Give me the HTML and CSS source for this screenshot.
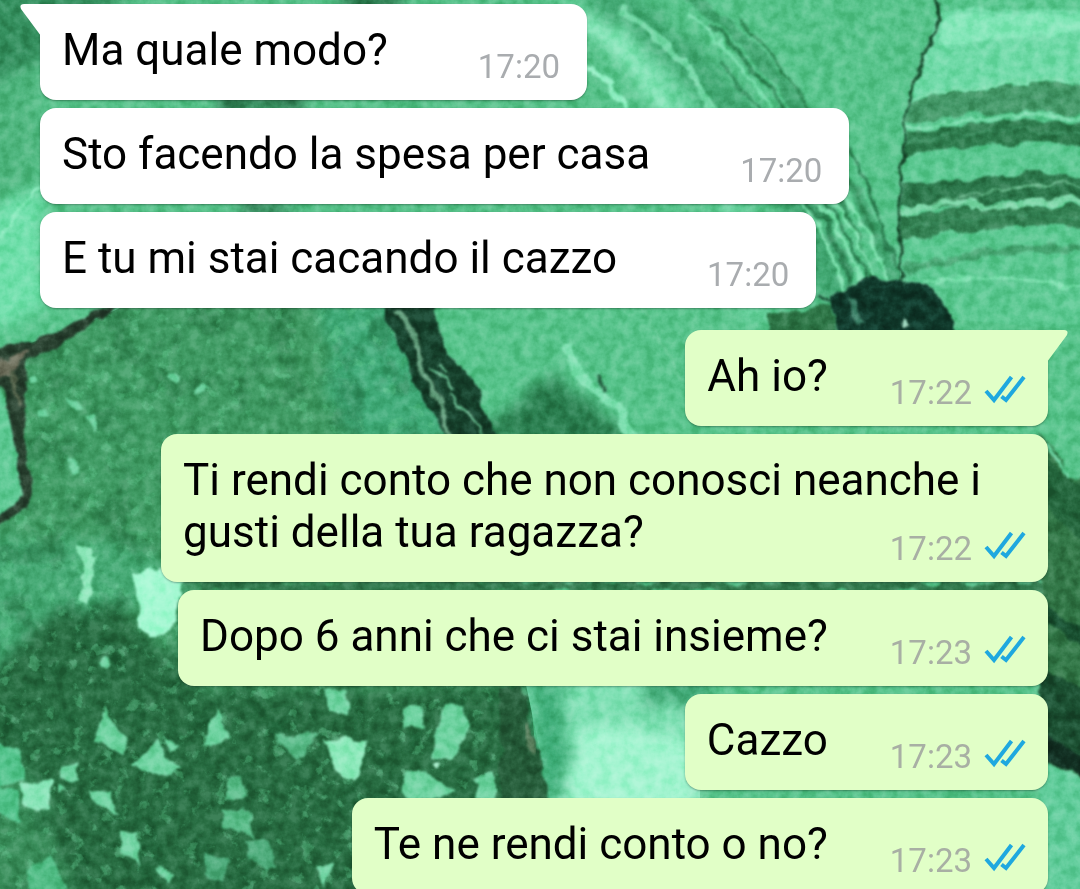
FILE: index.html
```html
<!DOCTYPE html>
<html lang="it">
<head>
    <meta charset="utf-8">
    <meta name="viewport" content="width=device-width, initial-scale=1">
    <title>Chat</title>
    <link rel="stylesheet" href="styles.css">
</head>
<body>
    <!-- malachite wallpaper -->
    <svg class="wallpaper" viewBox="0 0 1080 889" preserveAspectRatio="xMidYMin slice" aria-hidden="true">
        <defs>
            <filter id="rough" x="-10%" y="-10%" width="120%" height="120%">
                <feTurbulence type="fractalNoise" baseFrequency="0.05" numOctaves="3" seed="4" result="n"/>
                <feDisplacementMap in="SourceGraphic" in2="n" scale="14" xChannelSelector="R" yChannelSelector="G"/>
                <feGaussianBlur stdDeviation="1"/>
            </filter>
            <filter id="soft" x="-20%" y="-20%" width="140%" height="140%">
                <feTurbulence type="fractalNoise" baseFrequency="0.05" numOctaves="3" seed="9" result="n"/>
                <feDisplacementMap in="SourceGraphic" in2="n" scale="34" xChannelSelector="R" yChannelSelector="G"/>
                <feGaussianBlur stdDeviation="7"/>
            </filter>
            <filter id="grain" x="0" y="0" width="100%" height="100%">
                <feTurbulence type="fractalNoise" baseFrequency="0.09" numOctaves="4" seed="12"/>
                <feColorMatrix values="1.8 0 0 0 -0.4  1.8 0 0 0 -0.4  1.8 0 0 0 -0.4  0 0 0 0 1"/>
            </filter>
            <filter id="specks" x="0" y="0" width="100%" height="100%">
                <feTurbulence type="fractalNoise" baseFrequency="0.07" numOctaves="4" seed="21"/>
                <feColorMatrix values="0 0 0 0 0.4  0 0 0 0 0.8  0 0 0 0 0.58  7 0 0 0 -4.2"/>
            </filter>
            <filter id="shade" x="0" y="0" width="100%" height="100%">
                <feTurbulence type="fractalNoise" baseFrequency="0.03" numOctaves="5" seed="33"/>
                <feColorMatrix values="0 0 0 0 0.1  0 0 0 0 0.36  0 0 0 0 0.2  5 0 0 0 -2.6"/>
            </filter>
            <clipPath id="darkStone">
                <path d="M0 354 90 322 120 308 390 308 480 434 530 690 548 889 0 889Z"/>
            </clipPath>
        </defs>

        <rect width="1080" height="889" fill="#58c48c"/>

        <!-- top left slab -->
        <path d="M0 0H600V310H0Z" fill="#56c189"/>
        <g filter="url(#soft)">
            <path d="M-20-20H150L30 70-20 90Z" fill="#35905f"/>
            <path d="M-20 90 40 60V180L-20 220Z" fill="#50b780"/>
            <path d="M-20 210 45 190V310L-20 340Z" fill="#70dfab"/>
            <path d="M220 98H300V110H220ZM240 204H300V212H240Z" fill="#1d5a38"/>
            <path d="M340-10H400V8H340Z" fill="#2b7a4e"/>
        </g>
        <path d="M0 238 40 186" fill="none" stroke="#8cebbf" stroke-width="3" filter="url(#rough)"/>

        <!-- curved veins in the middle slab -->
        <g fill="none" filter="url(#soft)">
            <path d="M590-10C690 40 810 180 850 330" stroke="#43a974" stroke-width="34"/>
            <path d="M560 10C650 40 730 150 760 320" stroke="#6ad3a0" stroke-width="30"/>
            <path d="M585 20C650 65 660 110 700 160" stroke="#8ae8bc" stroke-width="16"/>
        </g>
        <g fill="none" filter="url(#rough)">
            <path d="M585 20C650 65 660 110 700 160" stroke="#86e4b8" stroke-width="6"/>
            <path d="M580 60C605 75 620 95 640 130" stroke="#94efc5" stroke-width="5"/>
            <path d="M620 10C690 50 700 100 740 150" stroke="#75d8a7" stroke-width="8"/>
            <path d="M690-5C790 70 860 190 900 290" stroke="#47aa76" stroke-width="12"/>
            <path d="M690 15C750 60 820 180 865 290" stroke="#7bdfae" stroke-width="3"/>
            <path d="M710 25C780 90 850 190 875 290" stroke="#338d5b" stroke-width="4"/>
            <path d="M740 20C805 90 845 160 875 240" stroke="#37925f" stroke-width="4"/>
            <path d="M720 60C780 140 820 190 855 290" stroke="#369160" stroke-width="3"/>
            <path d="M790 190C825 220 830 255 848 300M805 190C840 220 845 250 868 295M820 190C860 220 860 255 880 290M835 190C870 225 875 250 890 285" stroke="#80e2b0" stroke-width="3"/>
            <path d="M797 190C832 220 837 255 855 300M812 190C848 220 852 250 874 295M850 150C868 180 880 230 898 270" stroke="#2d8153" stroke-width="3"/>
        </g>

        <!-- layered stone on the right -->
        <path d="M934-5 939 20 918 70 908 105 900 205 900 290 960 320 1080 330V-5Z" fill="#5bc891"/>
        <g filter="url(#rough)">
            <path d="M940 10H1100V80C1020 78 970 88 915 97L920 70Z" fill="#70daa8"/>
            <path d="M945 15H1100V30L940 45Z" fill="#83e6b8"/>
            <path d="M910 102C970 88 1020 79 1100 84V116C1010 108 970 114 908 124Z" fill="#469a6a"/>
            <path d="M908 134C970 122 1030 115 1100 127V148C1020 138 980 145 903 154Z" fill="#2e7b4d"/>
            <path d="M902 186C980 178 1010 174 1040 173S1070 178 1100 182V204C1030 190 990 210 900 207Z" fill="#2d784c"/>
            <path d="M900 216C960 206 1020 200 1100 208V229C1040 220 980 232 900 240Z" fill="#338052"/>
            <path d="M904 270C980 255 1030 240 1080 250" fill="none" stroke="#48a673" stroke-width="8"/>
        </g>
        <g fill="none" filter="url(#rough)">
            <path d="M912 98C980 86 1020 76 1090 81M907 130C980 118 1030 110 1090 120" stroke="#83e0b3" stroke-width="3"/>
            <path d="M910 112C980 98 1030 94 1090 100M905 143C980 130 1030 124 1090 137M904 228C980 216 1030 210 1090 219" stroke="#3f9163" stroke-width="2"/>
            <path d="M900 214C940 202 955 200 985 206S1025 192 1090 204" stroke="#80d8aa" stroke-width="6"/>
            <path d="M930 202C980 190 1020 196 1040 185S1070 190 1090 190" stroke="#69bb8c" stroke-width="2"/>
            <path d="M925 283C980 272 1030 280 1090 288" stroke="#7de0af" stroke-width="3"/>
            <path d="M935-8 940 20 918 70 908 105 899 205 901 285" stroke="#174a2d" stroke-width="3"/>
        </g>
        <g filter="url(#rough)">
            <path d="M770 312 832 306 838 340H770Z" fill="#2f7748"/>
            <path d="M833 296C850 278 890 276 918 284 940 290 952 310 958 340H838Z" fill="#10382a"/>
            <path d="M816 293 834 302" stroke="#174a31" stroke-width="3"/>
            <path d="M850 300 860 325" stroke="#397d64" stroke-width="6"/>
            <path d="M903 319 909 323" stroke="#9fd9bf" stroke-width="4"/>
        </g>

        <!-- dark speckled stone -->
        <g clip-path="url(#darkStone)">
            <rect y="300" width="560" height="600" fill="#419c65"/>
            <g filter="url(#soft)">
                <path d="M320 300H400L480 440H340Z" fill="#42ac7a"/>
                <path d="M-20 630 100 590 210 690H540L570 910H-20Z" fill="#286d42"/>
                <path d="M-20 540H140L200 600 60 610-20 690Z" fill="#46aa75"/>
                <path d="M-20 750 30 770 60 860 90 910H-20Z" fill="#3a8e5b"/>
            </g>
            <rect y="300" width="560" height="600" filter="url(#shade)" opacity="0.3"/>
            <rect y="300" width="560" height="600" filter="url(#specks)" opacity="0.4"/>
        </g>
        <g fill="#6fd3a1" filter="url(#rough)">
            <path d="M78 546 95 546 98 565 90 580 88 604 78 600 84 566Z" fill="#92e8bd"/>
            <path d="M130 572 150 568 182 580 176 620 152 638 138 630 137 590Z" fill="#a4f8d2"/>
            <path d="M106 708 114 728 130 740 122 754 94 742Z"/>
            <path d="M134 764 158 738 166 760 184 768 150 776ZM165 738 181 742 168 751Z"/>
            <path d="M214 704 223 718 227 742 207 744Z"/>
            <path d="M274 736 318 734 298 760Z" fill="#5cbc8a"/>
            <path d="M326 738 370 742 354 782 332 768Z" fill="#8de9bb"/>
            <path d="M323 690 348 691 346 710 328 710Z"/>
            <path d="M-5 742 20 750 26 780-5 790ZM-5 790 18 792 20 822-5 812Z" fill="#54c48d"/>
            <path d="M22 784 50 780 50 810 24 806Z" fill="#8ae5b9"/>
            <path d="M90 788 110 790 120 814 94 806Z"/>
            <path d="M62 764 78 760 78 780 62 778ZM56 784 68 788 60 796Z"/>
            <path d="M224 778 242 776 245 798 224 800ZM222 814 248 808 254 838 224 828Z" fill="#5bbd8a"/>
            <path d="M243 842 270 838 274 868 250 862ZM204 852 228 860 222 882 204 872Z" fill="#50ad7d"/>
            <path d="M122 834 136 834 140 868 120 854Z"/>
            <path d="M28 868 50 856 68 892 34 900Z" fill="#52bd86"/>
            <path d="M156 864 176 874 168 886ZM314 864 334 866 326 890Z"/>
            <path d="M404 708 422 706 425 728 402 730Z"/>
            <path d="M448 706 464 704 470 732 448 760 432 758 434 736Z"/>
            <path d="M402 772 428 774 454 794 408 804ZM476 778 494 774 494 802 474 798Z"/>
            <path d="M68 399 84 408 76 412ZM86 419 96 415 94 430ZM36 409 46 407 46 415ZM68 459 82 470 72 474Z"/>
            <circle cx="42" cy="412" r="4"/>
            <circle cx="31" cy="378" r="4"/>
            <circle cx="175" cy="378" r="5"/>
            <circle cx="200" cy="390" r="5"/>
            <circle cx="104" cy="664" r="5"/>
            <circle cx="520" cy="788" r="5" fill="#a5ebc9"/>
            <circle cx="434" cy="766" r="3" fill="#a5ebc9"/>
        </g>

        <!-- crack on the left -->
        <g filter="url(#rough)">
            <path d="M-5 382 6 400 18 446 28 486 22 508-5 522Z" fill="#5fca95"/>
            <path d="M-5 350C30 336 60 340 90 312L120 306 95 322 60 346 26 362 24 430 34 478 28 508-5 528V518L22 496 12 430 4 388-5 382Z" fill="#28402f"/>
            <path d="M-2 360 26 350 12 376-2 378Z" fill="#6e705d"/>
            <path d="M14 368 20 405" stroke="#5a6951" stroke-width="4"/>
        </g>

        <!-- crack in the middle -->
        <g filter="url(#soft)">
            <path d="M455 440 560 375 640 450Z" fill="#2b7f50"/>
        </g>
        <g filter="url(#rough)">
            <path d="M380 300H430L446 350 478 390 500 440H450L415 385Z" fill="#16402b"/>
            <path d="M398 308 418 345 422 375 440 400 452 440" fill="none" stroke="#6aa483" stroke-width="5"/>
            <path d="M430 370 450 378 454 390M450 395 472 420 484 438M440 365 448 372" fill="none" stroke="#62b389" stroke-width="3"/>
            <path d="M568 342 578 374 618 408 636 440" fill="none" stroke="#7fe0b1" stroke-width="10"/>
            <path d="M596 374 606 390" stroke="#245f40" stroke-width="3"/>
            <path d="M640 310 695 400" fill="none" stroke="#6dcc9b" stroke-width="2"/>
        </g>

        <!-- pale patch and the lower right stones -->
        <path d="M525 680H700V800H550Z" fill="#7fe0b4"/>
        <g filter="url(#soft)">
            <path d="M525 680H565V800H545Z" fill="#3dac77"/>
            <path d="M580 725 690 735V810H555Z" fill="#a3f4d0"/>
            <path d="M640 665H710V705H650Z" fill="#43ab79"/>
        </g>
        <path d="M500 684H524L530 730 542 760 548 805H500Z" fill="#265d3a" filter="url(#rough)"/>
        <path d="M526 725 535 755" stroke="#587d5b" stroke-width="5" filter="url(#rough)"/>
        <path d="M200 582H1048V592H200Z" fill="#327a4e" filter="url(#rough)"/>
        <g filter="url(#rough)">
            <path d="M1040 430 1060 455 1070 478 1100 480V790L1040 755Z" fill="#337848"/>
            <path d="M1040 450 1066 478 1100 490V555L1040 505Z" fill="#23643b"/>
            <path d="M1040 595 1065 622 1100 635V665L1040 615Z" fill="#174d2e"/>
            <path d="M1040 665 1100 700V785L1040 760Z" fill="#1b4f31"/>
            <path d="M1040 732 1100 765V785L1040 758Z" fill="#122f22"/>
            <path d="M1040 762 1100 785V900H1040Z" fill="#62cd9c"/>
            <path d="M1048 446 1070 478" stroke="#6bd0a0" stroke-width="4"/>
        </g>

        <rect class="grain" width="1080" height="889" filter="url(#grain)"/>
    </svg>

    <!-- read receipt, reused by every sent message -->
    <svg class="sprite" aria-hidden="true">
        <symbol id="read" viewBox="0 0 42 32">
            <path d="M2 17 10 26 27.500 3M17.500 22.500 22 26 40 3"/>
        </symbol>
    </svg>

    <main class="chat">
        <div class="message received first">
            <svg class="tail" viewBox="0 0 32 32" aria-hidden="true"><path d="M3 0H32V32H21L1 5Q-1 0 4 0Z"/></svg>
            <p class="text">Ma quale modo?</p>
            <div class="meta"><time>17:20</time></div>
        </div>
        <div class="message received">
            <p class="text">Sto facendo la spesa per casa</p>
            <div class="meta"><time>17:20</time></div>
        </div>
        <div class="message received">
            <p class="text">E tu mi stai cacando il cazzo</p>
            <div class="meta"><time>17:20</time></div>
        </div>

        <div class="message sent first">
            <svg class="tail" viewBox="0 0 32 32" aria-hidden="true"><path d="M29 0H0V32H11L31 5Q33 0 28 0Z"/></svg>
            <p class="text">Ah io?</p>
            <div class="meta"><time>17:22</time><svg class="ticks" role="img" aria-label="Letto"><use href="#read"/></svg></div>
        </div>
        <div class="message sent long">
            <p class="text">Ti rendi conto che non conosci neanche i<br>gusti della tua ragazza?</p>
            <div class="meta"><time>17:22</time><svg class="ticks" role="img" aria-label="Letto"><use href="#read"/></svg></div>
        </div>
        <div class="message sent">
            <p class="text">Dopo 6 anni che ci stai insieme?</p>
            <div class="meta"><time>17:23</time><svg class="ticks" role="img" aria-label="Letto"><use href="#read"/></svg></div>
        </div>
        <div class="message sent">
            <p class="text">Cazzo</p>
            <div class="meta"><time>17:23</time><svg class="ticks" role="img" aria-label="Letto"><use href="#read"/></svg></div>
        </div>
        <div class="message sent">
            <p class="text">Te ne rendi conto o no?</p>
            <div class="meta"><time>17:23</time><svg class="ticks" role="img" aria-label="Letto"><use href="#read"/></svg></div>
        </div>
    </main>
</body>
</html>
```
FILE: styles.css
```css
* {
    box-sizing: border-box;
}

body {
    margin: 0;
    font-family: Roboto, "Liberation Sans", sans-serif;
    background-color: #58c48c;
}

.wallpaper {
    position: fixed;
    top: 0;
    left: 0;
    width: 100%;
    height: 100%;
    z-index: -1;
    color-interpolation-filters: sRGB;
}

.grain {
    mix-blend-mode: soft-light;
    opacity: 0.35;
}

.sprite {
    position: absolute;
    width: 0;
    height: 0;
}

.chat {
    display: flex;
    flex-direction: column;
    gap: 8px;
    height: 100vh;
    padding: 4px 32px 0 40px;
    overflow: hidden;
}

.message {
    position: relative;
    display: flex;
    flex-shrink: 0;
    align-items: flex-end;
    padding: 20px 22px 14px 22px;
    border-radius: 16px;
    box-shadow: 0 1px 2px rgba(0, 0, 0, 0.3);
}

.received {
    align-self: flex-start;
    padding-right: 27px;
    background-color: #fff;
    color: #fff;
}

.sent {
    align-self: flex-end;
    background-color: #e1ffc7;
    color: #e1ffc7;
}

.received + .sent {
    margin-top: 14px;
}

.received.first {
    border-top-left-radius: 0;
}

.sent.first {
    border-top-right-radius: 0;
}

.tail {
    position: absolute;
    top: 0;
    width: 32px;
    height: 32px;
    fill: currentColor;
}

.received .tail {
    left: -20px;
}

.sent .tail {
    right: -20px;
}

.text {
    margin: 0;
    padding-bottom: 10px;
    font-size: 44px;
    line-height: 52px;
    color: #000;
}

.meta {
    display: flex;
    align-items: flex-start;
    gap: 12px;
    margin-left: 90px;
    font-size: 33px;
    line-height: 38px;
    color: #a9acaf;
}

.sent .meta {
    margin-left: 62px;
    color: #a8afa4;
}

/* the time sits beside the last line, under the end of the first */
.long {
    display: grid;
}

.long .text,
.long .meta {
    grid-area: 1 / 1;
}

.long .text {
    padding-right: 45px;
}

.long .meta {
    align-self: end;
    justify-self: end;
}

.ticks {
    width: 42px;
    height: 32px;
    fill: none;
    stroke: #1fa8df;
    stroke-width: 4;
}
```
